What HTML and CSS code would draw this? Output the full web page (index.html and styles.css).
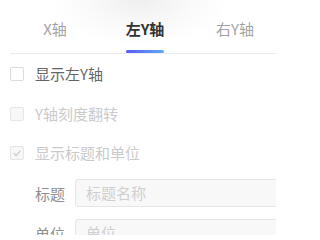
FILE: index.html
```html
<!DOCTYPE html>
<html>
<head>
<meta charset="utf-8">
<link rel="stylesheet" href="styles.css">
</head>
<body>
<div class="panel">
  <div class="tabs">
    <div class="tab">X轴</div>
    <div class="tab active"><span class="tab-label">左Y轴</span></div>
    <div class="tab">右Y轴</div>
  </div>
  <div class="form">
    <label class="check-row">
      <span class="box"></span>
      <span class="check-text">显示左Y轴</span>
    </label>
    <label class="check-row disabled">
      <span class="box"></span>
      <span class="check-text">Y轴刻度翻转</span>
    </label>
    <label class="check-row disabled last">
      <span class="box checked">
        <svg viewBox="0 0 14 14" width="14" height="14"><path d="M3.2 7.2 L6 10 L11 4.2" fill="none" stroke="#c8c8c8" stroke-width="1.3"/></svg>
      </span>
      <span class="check-text">显示标题和单位</span>
    </label>
    <div class="field-row">
      <span class="field-label">标题</span>
      <div class="input">标题名称</div>
    </div>
    <div class="field-row">
      <span class="field-label">单位</span>
      <div class="input">单位</div>
    </div>
  </div>
</div>
</body>
</html>
```
FILE: styles.css
```css
html, body {
  margin: 0;
  padding: 0;
  background: #fff;
  overflow: hidden;
}
body {
  width: 276px;
  height: 235px;
  font-family: "Noto Sans CJK SC", "Noto Sans", sans-serif;
  background: radial-gradient(ellipse 90px 45px at 140px 0px, #efefef 0%, #fafafa 60%, #ffffff 100%);
}
.panel {
  padding-left: 10px;
}
.tabs {
  display: flex;
  height: 54px;
  border-bottom: 1px solid #ebebeb;
  box-sizing: border-box;
  margin-right: -10px;
}
.tab {
  width: 90px;
  flex: none;
  display: flex;
  justify-content: center;
  align-items: flex-start;
  padding-top: 18px;
  font-size: 15px;
  line-height: 22px;
  color: #a3a3a3;
  box-sizing: border-box;
}
.tab.active {
  color: #333;
  font-weight: 700;
}
.tab-label {
  position: relative;
  height: 35px;
}
.tab-label::after {
  content: "";
  position: absolute;
  left: 0;
  right: 0;
  bottom: 0;
  height: 3px;
  border-radius: 2px;
  background: linear-gradient(90deg, #5a5cf4, #5daafc);
}
.form {
  padding-top: 10px;
}
.check-row {
  display: flex;
  align-items: center;
  height: 20px;
  margin-bottom: 19.5px;
  font-size: 15px;
  color: #666;
}
.check-row.last {
  margin-bottom: 16px;
}
.check-row.disabled {
  color: #cacaca;
}
.box {
  width: 14px;
  height: 14px;
  box-sizing: border-box;
  border: 1px solid #dcdcdc;
  border-radius: 2px;
  background: #fff;
  margin-right: 11px;
  display: flex;
  align-items: center;
  justify-content: center;
  flex: none;
}
.disabled .box {
  border-color: #e6e6e6;
  background: #f7f7f7;
}
.box svg {
  display: block;
}
.check-text {
  line-height: 20px;
}
.field-row {
  display: flex;
  align-items: center;
  margin-left: 25px;
  height: 28px;
  margin-bottom: 12px;
}
.field-label {
  width: 40px;
  flex: none;
  font-size: 15px;
  color: #8f8f8f;
}
.input {
  flex: none;
  width: 240px;
  height: 28px;
  box-sizing: border-box;
  border: 1px solid #e6e6e6;
  border-radius: 3px;
  background: #f8f8f8;
  padding-left: 10px;
  font-size: 15px;
  line-height: 26px;
  color: #cfcfcf;
}
```
